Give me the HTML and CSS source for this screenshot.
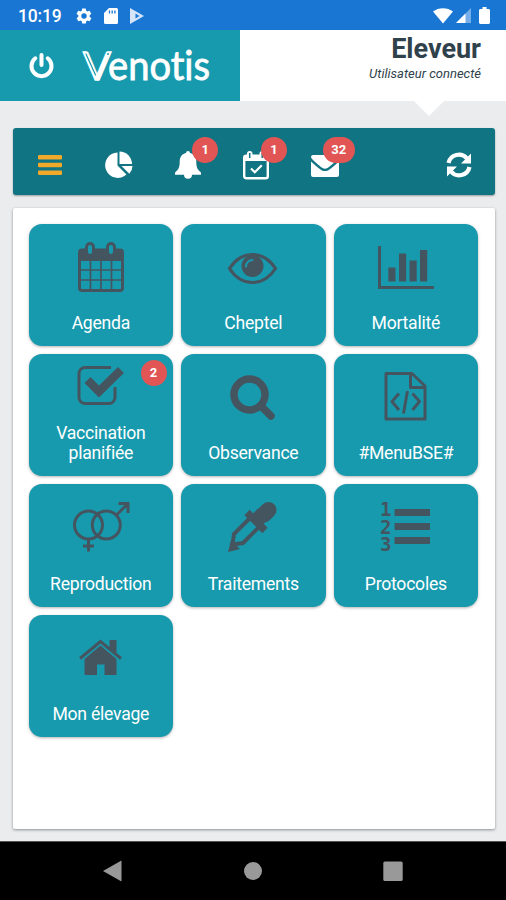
FILE: index.html
```html
<!DOCTYPE html>
<html lang="fr">
  <head>
    <meta charset="UTF-8" />
    <meta name="viewport" content="width=device-width, initial-scale=1.0" />
    <title>Venotis</title>
    <link rel="stylesheet" href="styles.css">
  </head>
  <body>
    <div class="status-bar">
      <span class="clock">10:19</span>
      <svg class="status-icon" width="18" height="18" viewBox="0 0 24 24"><path fill="#fff" fill-rule="evenodd" d="M19.4 13a7.5 7.5 0 0 0 0-2l2.1-1.6c.2-.2.3-.5.1-.7l-2-3.4c-.1-.2-.4-.3-.6-.2l-2.5 1a7 7 0 0 0-1.7-1l-.4-2.6c0-.3-.2-.5-.5-.5h-4c-.3 0-.5.2-.5.5L9 5.100a7 7 0 0 0-1.7 1l-2.500-1c-.2-.1-.5 0-.6.2l-2 3.400c-.1.2-.1.5.1.7L4.500 11a7.500 7.500 0 0 0 0 2l-2.100 1.600c-.2.2-.3.5-.1.7l2 3.400c.1.2.4.3.6.2l2.500-1a7 7 0 0 0 1.700 1l.4 2.600c0 .3.2.5.5.5h4c.3 0 .5-.2.5-.5l.4-2.600a7 7 0 0 0 1.700-1l2.500 1c.2.1.5 0 .6-.2l2-3.400c.1-.2.1-.5-.1-.7zM12 15.600a3.600 3.600 0 1 1 0-7.200 3.600 3.600 0 0 1 0 7.200z"/></svg>
      <svg class="status-icon" width="14" height="16" viewBox="0 0 14 16"><path fill="#fff" d="M5 0h7.500A1.500 1.500 0 0 1 14 1.500v13a1.500 1.500 0 0 1-1.500 1.500h-11A1.500 1.500 0 0 1 0 14.500V5z"/><path stroke="#1976d2" stroke-width="1.300" d="M5.500 2.500v3M8.200 2.500v3M10.900 2.500v3"/></svg>
      <svg class="status-icon" width="16" height="16" viewBox="0 0 16 16"><path fill="#d5e5f8" d="M1 0l14 8L1 16z"/><path fill="#1976d2" d="M6.500 5.500l4 2.500-4 2.500z"/></svg>
      <div class="signal">
        <svg width="20" height="16" viewBox="0 0 20 16"><path fill="#fff" d="M0 3.500C5.500-1 14.500-1 20 3.500L10 15.500z"/></svg>
        <svg width="15" height="15" viewBox="0 0 15 15"><path fill="#75aee8" d="M15 0v15H0z"/><path fill="#fff" d="M9.500 5.500V15H0z"/></svg>
        <svg class="battery" width="11" height="17" viewBox="0 0 11 17"><path fill="#fff" d="M3.500 0h4v2H10l1 1v13l-1 1H1l-1-1V3l1-1h2.500z"/></svg>
      </div>
    </div>

    <header class="header">
      <div class="brand">
        <svg width="25" height="26" viewBox="0 0 25 26"><g fill="none" stroke="#fff" stroke-width="4" stroke-linecap="round"><path d="M6.300 5.300a10 10 0 1 0 12.400 0"/><path d="M12.500 2v10"/></g></svg>
        <svg class="logo" width="140" height="64" viewBox="-2 -15 140 64">
          <text class="logo-initial" x="0" y="30.500" textLength="28" lengthAdjust="spacingAndGlyphs">V</text>
          <text class="logo-text" x="25" y="30.500" textLength="102" lengthAdjust="spacingAndGlyphs">enotis</text>
          <path stroke="#189aae" stroke-width="1.200" stroke-linecap="round" d="M3 5L12.500 26"/>
          <circle cx="25" cy="5" r="1" fill="#189aae"/>
        </svg>
      </div>
      <div class="user">
        <div class="user-name">Eleveur</div>
        <div class="user-state">Utilisateur connecté</div>
      </div>
    </header>

    <main class="content">
      <nav class="toolbar">
        <a class="tool"><svg width="26" height="22" viewBox="0 0 26 22"><g fill="#f0a929"><rect x="1" y="1" width="24" height="4.500" rx="1.200"/><rect x="1" y="8.700" width="24" height="4.500" rx="1.200"/><rect x="1" y="16.400" width="24" height="4.500" rx="1.200"/></g></svg></a>
        <a class="tool"><svg width="28" height="28" viewBox="0 0 28 28"><g fill="#fff"><path d="M12.500 1.500v13l9 9A12.700 12.700 0 1 1 12.500 1.500z"/><path d="M14.500.500A12.500 12.500 0 0 1 27 13H14.500z"/><path d="M16.500 15H27.500a12 12 0 0 1-3.200 7.800z"/></g></svg></a>
        <a class="tool"><svg width="28" height="30" viewBox="0 0 28 30"><path fill="#fff" d="M12 3a2 2 0 0 1 4 0c4.500 1 6.300 4.500 6.300 9 0 5.500 1.500 8 4.700 10.500v2.200h-9a4 4 0 0 1-8 0H1v-2.200C4.200 20 5.700 17.500 5.700 12c0-4.500 1.800-8 6.300-9z"/></svg><span class="badge">1</span></a>
        <a class="tool"><svg width="28" height="32" viewBox="0 0 28 32"><rect x="2.200" y="6.700" width="23.600" height="22.500" rx="2" fill="none" stroke="#fff" stroke-width="2.400"/><path fill="#fff" d="M2 6h24v6H2z"/><g fill="#fff" stroke="#fff" stroke-width="2"><rect x="6" y="3" width="3.500" height="5" rx="1.700"/><rect x="18.500" y="3" width="3.500" height="5" rx="1.700"/></g><path stroke="#117482" stroke-width="1.500" d="M7.700 4v5M20.200 4v5"/><path d="M9 19.500l3.800 3.800 7-7" fill="none" stroke="#fff" stroke-width="2.200"/></svg><span class="badge">1</span></a>
        <a class="tool"><svg width="28" height="26" viewBox="0 0 28 26"><g fill="#fff"><path d="M2 3h24a2 2 0 0 1 2 2c0 2-8 8.500-11.500 11-1.500 1.100-3.500 1.100-5 0C8 13.500 0 7 0 5a2 2 0 0 1 2-2z"/><path d="M0 9.500c4 3.700 7 6 9.500 8 2.800 2.100 6.200 2.100 9 0 2.500-2 5.500-4.300 9.500-8V23a2 2 0 0 1-2 2H2a2 2 0 0 1-2-2z"/></g></svg><span class="badge badge-wide">32</span></a>
        <a class="tool tool-refresh"><svg width="26" height="26" viewBox="0 0 26 26"><g fill="none" stroke="#fff" stroke-width="4.200"><path d="M2.500 11a10.600 10.600 0 0 1 18.500-4.500"/><path d="M23.500 15A10.600 10.600 0 0 1 5 19.500"/></g><path fill="#fff" d="M25 1.500v10H15zM1 24.500v-10h10z"/></svg></a>
      </nav>

      <section class="panel">
        <a class="tile">
          <svg class="tile-icon" viewBox="0 0 60 60"><g fill="none" stroke="#455560"><rect x="8.500" y="16" width="43" height="40.500" rx="2.500" stroke-width="3"/><path fill="#455560" stroke="none" d="M8 15h44v12H8z"/><rect x="15.500" y="9.500" width="7" height="12" rx="3.500" fill="#189aae" stroke-width="3"/><rect x="36.500" y="9.500" width="7" height="12" rx="3.500" fill="#189aae" stroke-width="3"/><path stroke-width="1.700" d="M19.500 26v30M30 26v30M40.500 26v30M9 36h42M9 46h42"/></g></svg>
          <span class="tile-label">Agenda</span>
        </a>
        <a class="tile">
          <svg class="tile-icon" viewBox="0 0 60 60"><path d="M6.500 34.500C12 26 20 20.500 29.500 20.500S47 26 52.500 34.500C47 43 39 48.500 29.500 48.500S12 43 6.500 34.500z" fill="none" stroke="#455560" stroke-width="3.200"/><circle cx="29.500" cy="32" r="11" fill="#455560"/><path d="M23 32.500a6.500 6.500 0 0 1 6.500-6.500" fill="none" stroke="#189aae" stroke-width="2" stroke-linecap="round"/></svg>
          <span class="tile-label">Cheptel</span>
        </a>
        <a class="tile">
          <svg class="tile-icon" viewBox="0 0 60 60"><path d="M3.500 12v41.500H58" fill="none" stroke="#455560" stroke-width="3"/><path fill="#455560" d="M12.300 33.500h7.200v14h-7.200zM23 19.500h7.200v28H23zM33.500 26.500h7.200v21h-7.200zM44 16h7.200v31.500H44z"/></svg>
          <span class="tile-label">Mortalité</span>
        </a>
        <a class="tile">
          <svg class="tile-icon" viewBox="0 0 60 60"><g fill="none" stroke="#455560"><path stroke-width="3" d="M40 3.500H14a6 6 0 0 0-6 6v24a6 6 0 0 0 6 6h24a6 6 0 0 0 6-6V23"/><path stroke-width="8.500" d="M16.500 16L28 27.500 50 6"/></g></svg>
          <span class="badge tile-badge">2</span>
          <span class="tile-label">Vaccination planifiée</span>
        </a>
        <a class="tile">
          <svg class="tile-icon" viewBox="0 0 60 60"><g fill="none" stroke="#455560" stroke-width="7.500" stroke-linecap="round"><circle cx="26.500" cy="30.500" r="15.500"/><path d="M38 42l10 10"/></g></svg>
          <span class="tile-label">Observance</span>
        </a>
        <a class="tile">
          <svg class="tile-icon" viewBox="0 0 60 60"><g fill="none" stroke="#455560" stroke-width="3" stroke-linejoin="round"><path d="M10 9.500h26L49 22v33H10z"/><path d="M34.500 10v13.500H49"/><path d="M23 29.500l-7 8 7 8.500M36.500 29.500l7 8-7 8.500M31.500 27l-4 22.500"/></g></svg>
          <span class="tile-label">#MenuBSE#</span>
        </a>
        <a class="tile">
          <svg class="tile-icon" viewBox="0 0 60 60"><g fill="none" stroke="#455560" stroke-width="3"><circle cx="17.500" cy="31" r="14"/><circle cx="35.300" cy="31" r="14"/><path d="M45.500 21L57 9.500M47.500 9.500H57V19M17.500 45v12.500M12 52h11"/></g></svg>
          <span class="tile-label">Reproduction</span>
        </a>
        <a class="tile">
          <svg class="tile-icon" viewBox="0 0 60 60"><g fill="none" stroke="#455560"><path stroke-width="4" d="M28.500 22.500L11 40l-1.500 10.500L20 49l17.500-17.500"/><path fill="#455560" stroke="none" d="M5 58l3-12 9 9z"/><path stroke-width="7.500" d="M24 18.500L42 36.500"/><path stroke-width="15" d="M33 27l7-7"/><path stroke-width="16" stroke-linecap="round" d="M41 20.500l4.500-4.500"/></g></svg>
          <span class="tile-label">Traitements</span>
        </a>
        <a class="tile">
          <svg class="tile-icon" viewBox="0 0 60 60"><path fill="#455560" d="M18.500 15H54v7H18.500zM18.500 29H54v7H18.500zM18.500 43H54v7H18.500z"/><g class="list-number"><text x="4" y="22">1</text><text x="4" y="39.500">2</text><text x="4" y="57">3</text></g></svg>
          <span class="tile-label">Protocoles</span>
        </a>
        <a class="tile">
          <svg class="tile-icon" viewBox="0 0 60 60"><path fill="#455560" d="M13.500 34L29.500 20.500l16 13.500V50H33.500V39.500H26V50H14.500a1 1 0 0 1-1-1zM38.500 15h7v14l-7-6z"/><path d="M9 33.500L29.500 16.500 50 33.500" fill="none" stroke="#455560" stroke-width="3"/></svg>
          <span class="tile-label">Mon élevage</span>
        </a>
      </section>
    </main>

    <footer class="android-nav">
      <svg width="20" height="22" viewBox="0 0 20 22"><path fill="#999" d="M0 11L18.500.500v21z"/></svg>
      <svg width="20" height="22" viewBox="0 0 20 22"><circle cx="10" cy="11" r="9" fill="#999"/></svg>
      <svg width="20" height="22" viewBox="0 0 20 22"><rect x=".300" y="1.500" width="19.400" height="19.400" rx="1.500" fill="#999"/></svg>
    </footer>
  </body>
</html>
```
FILE: styles.css
```css
* {
  box-sizing: border-box;
}
body {
  display: flex;
  flex-direction: column;
  height: 900px;
  margin: 0;
  overflow: hidden;
  font-family: Roboto, sans-serif;
  background-color: #eaecee;
}
svg {
  display: block;
  flex: none;
}
.status-bar {
  display: flex;
  align-items: center;
  height: 30px;
  padding: 1px 16px 0 18px;
  background-color: #1976d2;
  color: #fff;
}
.clock {
  width: 57px;
  font-size: 17.5px;
  font-weight: 500;
  letter-spacing: -0.2px;
}
.status-icon {
  margin-right: 11px;
}
.signal {
  display: flex;
  align-items: center;
  gap: 3px;
  margin-left: auto;
}
.battery {
  margin-left: 5px;
}
.header {
  display: flex;
  height: 71px;
  background-color: #fff;
}
.brand {
  display: flex;
  align-items: center;
  width: 240px;
  padding-left: 29px;
  background-color: #189aae;
}
.logo {
  margin-left: 27px;
}
.logo-initial,
.logo-text {
  font-family: Lato, sans-serif;
  font-size: 39px;
  font-variant-ligatures: none;
  fill: #fff;
  stroke: #fff;
  stroke-width: 1.3px;
}
.logo-text {
  font-size: 41px;
  stroke-width: 0.8px;
}
.user {
  position: relative;
  flex: 1;
  padding: 4px 25px 0 0;
  text-align: right;
  color: #2f424c;
}
.user::after {
  content: "";
  position: absolute;
  right: 61px;
  top: 70px;
  border: 16px solid transparent;
  border-top-color: #fff;
  border-bottom: none;
}
.user-name {
  font-size: 27px;
  line-height: 31px;
  font-weight: 700;
}
.user-state {
  font-size: 13px;
  line-height: 17px;
  font-style: italic;
}
.content {
  display: flex;
  flex: 1;
  flex-direction: column;
  gap: 13px;
  padding: 27px 11.5px 12px 13px;
}
.toolbar {
  display: flex;
  height: 67px;
  padding: 7px 1px 0 2.6px;
  border-radius: 3px;
  background-color: #117482;
  box-shadow: 0 1px 2px rgba(0, 0, 0, 0.35);
}
.tool {
  position: relative;
  display: flex;
  align-items: center;
  justify-content: center;
  width: 68.8px;
}
.tool-refresh {
  margin-left: auto;
}
.badge {
  position: absolute;
  left: 39px;
  top: 2px;
  min-width: 26px;
  height: 26px;
  padding: 0 8.5px;
  border-radius: 13px;
  background-color: #e15554;
  color: #fff;
  font-size: 13px;
  line-height: 26px;
  font-weight: 700;
  text-align: center;
}
.badge-wide {
  left: 32px;
}
.panel {
  display: grid;
  flex: 1;
  grid-template-columns: repeat(3, 144.5px);
  grid-auto-rows: 122.4px;
  align-content: start;
  gap: 8px;
  padding: 15.6px;
  border-radius: 2px;
  background-color: #fff;
  box-shadow: 0 1px 3px rgba(0, 0, 0, 0.4);
}
.tile {
  position: relative;
  display: flex;
  flex-direction: column;
  align-items: center;
  justify-content: space-between;
  padding: 10px 20px 13px;
  border-radius: 13px;
  background-color: #189aae;
  box-shadow: 0 1px 3px rgba(0, 0, 0, 0.3);
  color: #fff;
}
.tile-icon {
  width: 60px;
  height: 60px;
  margin-bottom: -1px;
}
.tile-badge {
  left: 112px;
  top: 6px;
}
.tile-label {
  margin: 0 -10px;
  font-size: 17.6px;
  line-height: 20px;
  letter-spacing: -0.25px;
  text-align: center;
}
.list-number {
  fill: #455560;
  font-family: "DejaVu Sans Mono", monospace;
  font-size: 19px;
  font-weight: 700;
}
.android-nav {
  display: flex;
  align-items: center;
  justify-content: space-between;
  height: 59px;
  padding: 0 103px;
  border-top: 1px solid #555;
  background-color: #000;
}
```
